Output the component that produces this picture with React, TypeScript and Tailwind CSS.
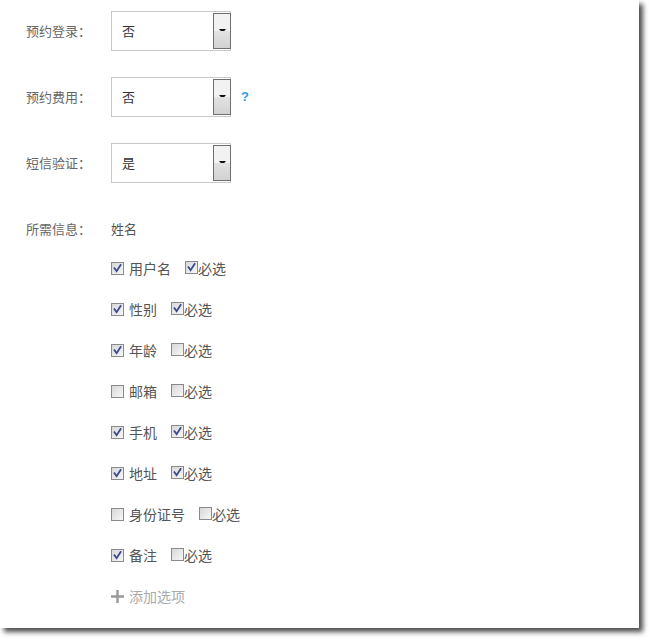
import React from "react";

const font = { fontFamily: '"Noto Sans CJK SC", "Microsoft YaHei", sans-serif' };

function Box({ checked, className = "" }: { checked: boolean; className?: string }) {
  return (
    <span
      className={`inline-block w-[13px] h-[13px] border border-[#8a8a8a] bg-gradient-to-br from-[#d8d8d8] to-[#f7f7f7] relative shrink-0 ${className}`}
    >
      {checked && (
        <svg viewBox="0 0 11 11" className="absolute inset-0 w-[11px] h-[11px]">
          <path d="M2.5 5.2 L4.6 8.2 L8.6 2" fill="none" stroke="#3a4a8c" strokeWidth="1.8" strokeLinecap="square" />
        </svg>
      )}
    </span>
  );
}

function Select({ value }: { value: string }) {
  return (
    <div className="w-[120px] h-[40px] border border-[#c8c8c8] bg-white flex items-stretch">
      <div className="flex-1 flex items-center pl-[10px] text-[13px] text-[#333]">{value}</div>
      <div className="w-[18px] my-[1px] mr-[-1px] border border-[#6e6e6e] flex flex-col">
        <div className="h-1/2 bg-[#f2f2f2] flex items-end justify-center">
          <svg width="7" height="4" viewBox="0 0 7 4" className="mb-[-2px]">
            <path d="M0 0 H7 L3.5 4 Z" fill="#111" />
          </svg>
        </div>
        <div className="h-1/2 bg-gradient-to-b from-[#e2e2e2] to-[#d2d2d2]" />
      </div>
    </div>
  );
}

const items: [string, boolean, boolean][] = [
  ["用户名", true, true],
  ["性别", true, true],
  ["年龄", true, false],
  ["邮箱", false, false],
  ["手机", true, true],
  ["地址", true, true],
  ["身份证号", false, false],
  ["备注", true, false],
];

export default function App() {
  return (
    <div className="bg-white w-[654px] h-[643px]" style={font}>
      <div className="w-[639px] h-[628px] bg-white shadow-[4px_4px_5px_0px_rgba(0,0,0,0.7)] pt-[11px] pl-[26px]">
        {[
          ["预约登录：", "否", false],
          ["预约费用：", "否", true],
          ["短信验证：", "是", false],
        ].map(([label, value, q], i) => (
          <div key={i} className={`flex items-center h-[40px] ${i > 0 ? "mt-[26px]" : ""}`}>
            <div className="w-[85px] text-[13px] text-[#666]">{label as string}</div>
            <Select value={value as string} />
            {q && <span className="ml-[10px] text-[13px] font-bold text-[#2d9be8]" style={{ fontFamily: "Arial, sans-serif" }}>?</span>}
          </div>
        ))}
        <div className="flex mt-[25px]">
          <div className="w-[85px] h-[41px] flex items-center text-[13px] text-[#666]">所需信息：</div>
          <div className="flex flex-col">
            <div className="h-[41px] flex items-center text-[13px] text-[#555]">姓名</div>
            {items.map(([name, a, b], i) => (
              <div key={name} className={`h-[41px] flex items-center text-[14px] text-[#555] ${i === 0 ? "mt-[-1px]" : ""}`}>
                <Box checked={a} />
                <span className="ml-[5px] mr-[14px]">{name}</span>
                <Box checked={b} className="mb-[3px]" />
                <span>必选</span>
              </div>
            ))}
            <div className="h-[41px] flex items-center text-[14px] text-[#aaa]">
              <svg width="13" height="13" viewBox="0 0 13 13">
                <path d="M6.5 0 V13 M0 6.5 H13" stroke="#999" strokeWidth="2.4" />
              </svg>
              <span className="ml-[5px]">添加选项</span>
            </div>
          </div>
        </div>
      </div>
    </div>
  );
}
